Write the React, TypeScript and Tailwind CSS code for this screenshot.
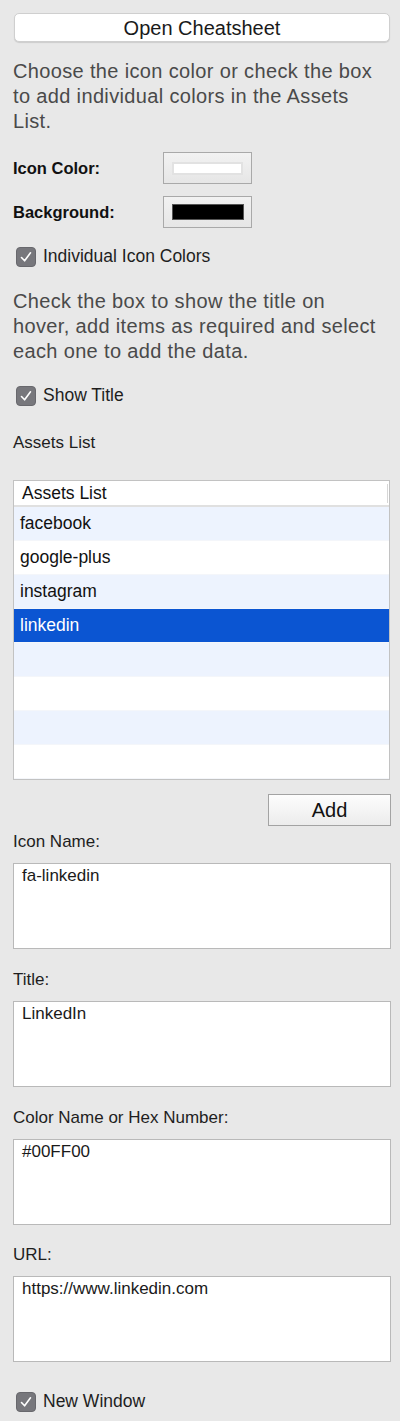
import React from "react";

const F = { fontFamily: '"Liberation Sans", Arial, Helvetica, sans-serif' };

function Check() {
  return (
    <div className="w-[20px] h-[20px] rounded-[4px] bg-[#77777c] border border-[#68686d] flex items-center justify-center shrink-0">
      <svg width="14" height="14" viewBox="0 0 14 14">
        <path d="M2.5 7.5 L5.6 10.8 L11.5 2.8" fill="none" stroke="#ffffff" strokeWidth="1.6" strokeLinecap="round" strokeLinejoin="round" />
      </svg>
    </div>
  );
}

function CheckRow({ label, className }: { label: string; className?: string }) {
  return (
    <div className={"flex items-center h-[20px] pl-[3px] " + (className || "")}>
      <Check />
      <span className="ml-[7px] text-[17.5px] text-[#1e1e1e] leading-none">{label}</span>
    </div>
  );
}

function Field({ label, value, labelClass }: { label: string; value: string; labelClass: string }) {
  return (
    <>
      <div className={"text-[17px] leading-[20px] text-[#1e1e1e] " + labelClass}>{label}</div>
      <div className="mt-[11px] h-[86px] bg-white border border-[#b9b9b9] pl-[8px] pt-[2px] text-[17px] leading-[20px] text-[#1a1a1a]">
        {value}
      </div>
    </>
  );
}

export default function App() {
  const rows: { t: string; bg: string; sel?: boolean }[] = [
    { t: "facebook", bg: "bg-[#edf3fe]" },
    { t: "google-plus", bg: "bg-white" },
    { t: "instagram", bg: "bg-[#edf3fe]" },
    { t: "linkedin", bg: "bg-[#0b55d2]", sel: true },
    { t: "", bg: "bg-[#edf3fe]" },
    { t: "", bg: "bg-white" },
    { t: "", bg: "bg-[#edf3fe]" },
    { t: "", bg: "bg-white" },
  ];
  return (
    <div className="w-[400px] h-[1421px] bg-[#e8e8e8] overflow-hidden" style={F}>
      <div className="flex flex-col pl-[13px] pr-[9px] pt-[13px]">
        <div className="h-[29px] mx-[1px] bg-white rounded-[5px] border border-[#cfcfcf] shadow-[0_1px_1px_rgba(0,0,0,0.12)] flex items-center justify-center text-[20px] text-[#1a1a1a]">
          Open Cheatsheet
        </div>
        <p className="mt-[17px] text-[20px] leading-[25px] tracking-[0.35px] text-[#4a4a4a] whitespace-nowrap">
          Choose the icon color or check the box
          <br />
          to add individual colors in the Assets
          <br />
          List.
        </p>
        <div className="mt-[18px] flex items-center h-[32px]">
          <span className="w-[150px] font-bold text-[16.5px] text-[#111]">Icon Color:</span>
          <div className="w-[89px] h-[32px] border border-[#a9a9a9] bg-gradient-to-b from-[#f2f2f2] to-[#e6e6e6] flex items-center justify-center">
            <div className="w-[71px] h-[13px] bg-white border-2 border-[#e2e2e2]" />
          </div>
        </div>
        <div className="mt-[12px] flex items-center h-[32px]">
          <span className="w-[150px] font-bold text-[16.5px] text-[#111]">Background:</span>
          <div className="w-[89px] h-[32px] border border-[#a9a9a9] bg-gradient-to-b from-[#f2f2f2] to-[#e6e6e6] flex items-center justify-center">
            <div className="w-[72px] h-[16px] bg-black border border-[#555]" />
          </div>
        </div>
        <CheckRow label="Individual Icon Colors" className="mt-[19px]" />
        <p className="mt-[22px] text-[20px] leading-[25px] tracking-[0.35px] text-[#4a4a4a] whitespace-nowrap">
          Check the box to show the title on
          <br />
          hover, add items as required and select
          <br />
          each one to add the data.
        </p>
        <CheckRow label="Show Title" className="mt-[22px]" />
        <div className="mt-[27px] text-[17px] leading-[20px] text-[#1e1e1e]">Assets List</div>
        <div className="mt-[27px] mr-[1px] h-[300px] border border-[#c2c2c2] bg-white flex flex-col">
          <div className="h-[26px] shrink-0 bg-white border-b-2 border-[#e0e0e0] flex items-center pl-[8px] text-[17.5px] text-[#111] relative">
            Assets List
            <div className="absolute right-[1px] top-[3px] w-[1px] h-[19px] bg-[#d6d6d6]" />
          </div>
          {rows.map((r, i) => (
            <div
              key={i}
              className={"h-[34px] shrink-0 flex items-center pl-[6px] text-[17.5px] border-b border-[#f4f6fa] " + r.bg + (r.sel ? " text-white" : " text-[#111]")}
            >
              {r.t}
            </div>
          ))}
        </div>
        <div className="mt-[14px] flex justify-end">
          <div className="w-[123px] h-[32px] border border-[#a3a3a3] bg-gradient-to-b from-[#fdfdfd] to-[#ececec] flex items-center justify-center text-[20px] text-[#111]">
            Add
          </div>
        </div>
        <Field label="Icon Name:" value="fa-linkedin" labelClass="mt-[6px]" />
        <Field label="Title:" value="LinkedIn" labelClass="mt-[21px]" />
        <Field label="Color Name or Hex Number:" value="#00FF00" labelClass="mt-[21px]" />
        <Field label="URL:" value="https://www.linkedin.com" labelClass="mt-[20px]" />
        <CheckRow label="New Window" className="mt-[30px]" />
        <div className="mt-[9px] -mr-[9px] h-[1px] bg-[#c9c9c9]" />
      </div>
    </div>
  );
}
